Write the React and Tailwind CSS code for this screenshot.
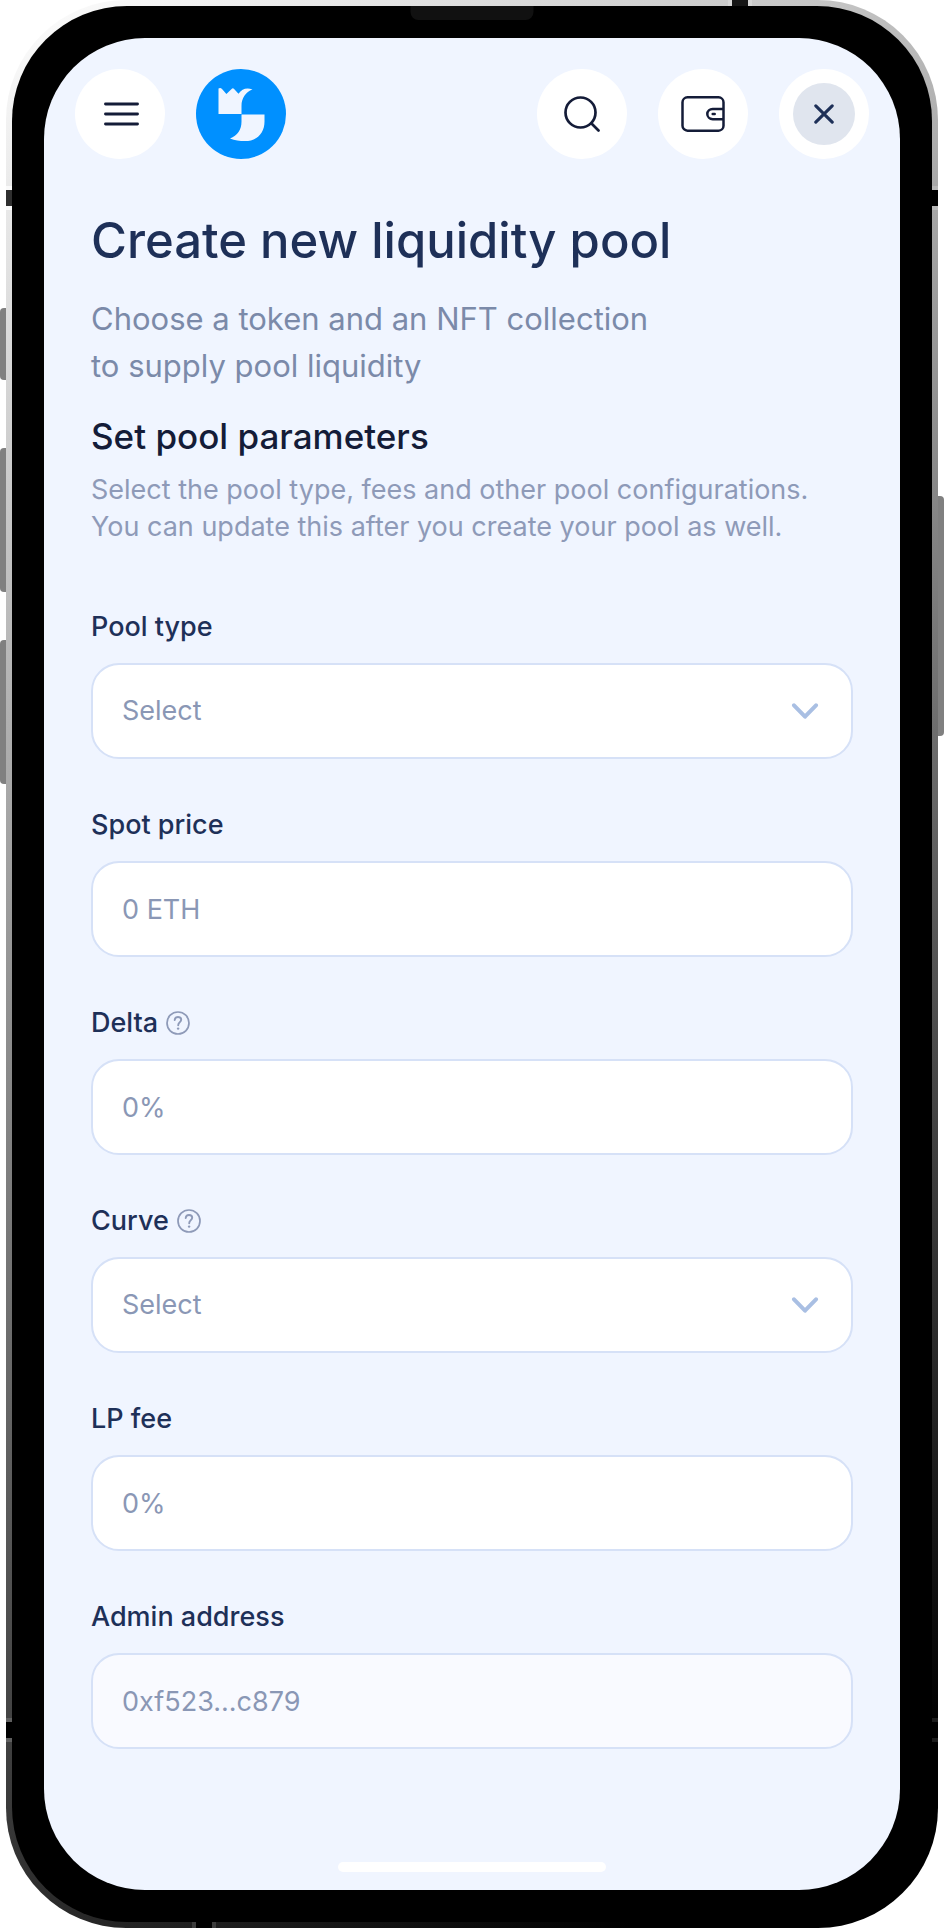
import React, { useState } from 'react';

const fields = [
  { id: 'poolType', label: 'Pool type', type: 'select', options: ['Buy', 'Sell', 'Trade'] },
  { id: 'spotPrice', label: 'Spot price', placeholder: '0 ETH' },
  { id: 'delta', label: 'Delta', placeholder: '0%', help: true },
  { id: 'curve', label: 'Curve', type: 'select', options: ['Linear', 'Exponential'], help: true },
  { id: 'lpFee', label: 'LP fee', placeholder: '0%' },
  { id: 'adminAddress', label: 'Admin address', placeholder: '0xf523...c879', disabled: true }
];

const LogoIcon = () => (
  <svg className="w-[90px] h-[90px]" viewBox="0 0 90 90" aria-hidden="true">
    <circle cx="45" cy="45" r="45" fill="#0090ff" />
    <path
      fill="#f0f5ff"
      d="M22.500 19.500c1.300-1 2.500-.7 3.500.6l4.400 4.900 5.200-5c1-.9 1.600-.9 2.500 0l4.400 4.700c3.500-4.800 8-6.600 14-4.300-6.800 2.500-11 8.500-11 16.500v8.100h-23z"
    />
    <path
      fill="#f0f5ff"
      d="M45.500 45.500h23v7c0 12-8 19.500-19.500 19.500-5.500 0-10-.5-15-2.500 7.500-2.800 11.500-9 11.500-17z"
    />
  </svg>
);

const MenuIcon = () => (
  <svg className="w-10 h-6" viewBox="0 0 40 24" fill="none" stroke="#141c38" strokeWidth="2.900" strokeLinecap="round">
    <path d="M5.500 2h32M5.500 12h32M5.500 22h32" />
  </svg>
);

const SearchIcon = () => (
  <svg className="w-9 h-9" viewBox="0 0 36 36" fill="none" stroke="#141c38" strokeWidth="2.700" strokeLinecap="round">
    <circle cx="16.500" cy="16.500" r="15" />
    <path d="M27.500 27.500L34.500 34.500" />
  </svg>
);

const WalletIcon = () => (
  <svg className="w-11 h-9" viewBox="0 0 44 36" fill="none" stroke="#141c38" strokeWidth="2.500">
    <rect x="1.500" y="1.300" width="41" height="33.400" rx="5" />
    <path d="M42 13H31.700a5.300 5 0 0 0 0 10.200H42" />
    <path d="M31.700 18.100h2" strokeLinecap="round" />
  </svg>
);

const CloseIcon = () => (
  <svg className="w-5 h-5" viewBox="0 0 20 20" fill="none" stroke="#1e3058" strokeWidth="3.100" strokeLinecap="round">
    <path d="M1.800 1.800l16.400 16.400M18.200 1.800L1.800 18.200" />
  </svg>
);

const ChevronIcon = () => (
  <svg
    className="pointer-events-none absolute right-[34px] top-1/2 h-4 w-7 -translate-y-1/2"
    viewBox="0 0 28 16"
    fill="none"
    stroke="#a9bfe3"
    strokeWidth="4"
    strokeLinecap="round"
    strokeLinejoin="round"
  >
    <path d="M3 2.300l11 11.400L25 2.300" />
  </svg>
);

const HelpIcon = () => (
  <svg className="w-6 h-6" viewBox="0 0 24 24" fill="none" stroke="#8e9ab8" strokeLinecap="round">
    <circle cx="12" cy="12" r="11" strokeWidth="1.700" />
    <path d="M8.700 9c.2-2 1.500-3 3.300-3s3.200 1.100 3.200 2.800c0 2.200-3 2.600-3 5.400" strokeWidth="1.900" />
    <circle cx="12.100" cy="17.600" r="1.200" fill="#8e9ab8" stroke="none" />
  </svg>
);

const IconButton = ({ label, children }) => (
  <button type="button" aria-label={label} className="flex h-[90px] w-[90px] items-center justify-center rounded-full bg-white">
    {children}
  </button>
);

const Field = ({ field, value, onChange }) => {
  const box = 'block h-24 w-full rounded-[28px] border-2 border-[#d6e1f7] px-[29px] text-[27px] text-[#8a97b5] placeholder:text-[#8a97b5] placeholder:opacity-100';

  return (
    <div className="flex flex-col gap-5">
      <div className="flex h-8 items-center gap-2">
        <label htmlFor={field.id} className="text-[27px] leading-8 font-medium text-[#1e3058]">
          {field.label}
        </label>
        {field.help && (
          <button type="button" aria-label={`About ${field.label}`}>
            <HelpIcon />
          </button>
        )}
      </div>
      {field.type === 'select' ? (
        <div className="relative">
          <select id={field.id} value={value} onChange={onChange} className={`${box} appearance-none bg-white`}>
            <option value="">Select</option>
            {field.options.map((option) => (
              <option key={option} value={option}>{option}</option>
            ))}
          </select>
          <ChevronIcon />
        </div>
      ) : (
        <input
          id={field.id}
          type="text"
          value={value}
          onChange={onChange}
          placeholder={field.placeholder}
          disabled={field.disabled}
          className={`${box} ${field.disabled ? 'bg-[#f9faff]' : 'bg-white'}`}
        />
      )}
    </div>
  );
};

// Antenna gaps and side buttons on the metal rim
const FrameDetails = () => (
  <div aria-hidden="true">
    <div className="absolute left-0 top-[308px] h-[72px] w-[6px] rounded-l bg-[#808080]" />
    <div className="absolute left-0 top-[448px] h-36 w-[6px] rounded-l bg-[#808080]" />
    <div className="absolute left-0 top-[640px] h-36 w-[6px] rounded-l bg-[#808080]" />
    <div className="absolute right-0 top-[496px] h-60 w-[6px] rounded-r bg-[#808080]" />
    <div className="absolute left-[6px] top-[186px] h-6 w-[6px] border-y-4 border-[#fafafa] bg-[#303030]" />
    <div className="absolute right-[6px] top-[186px] h-6 w-[6px] border-y-4 border-[#b8b8b8] bg-black" />
    <div className="absolute left-[6px] bottom-[186px] h-6 w-[6px] border-y-4 border-[#606060] bg-black" />
    <div className="absolute right-[6px] bottom-[186px] h-6 w-[6px] border-y-4 border-[#1c1c1c] bg-black" />
    <div className="absolute right-48 top-0 h-[6px] w-6 border-x-4 border-[#d6d6d6] bg-[#161616]" />
    <div className="absolute left-48 bottom-0 h-[6px] w-6 border-x-4 border-[#3c3c3c] bg-black" />
    <div className="absolute left-1/2 top-[6px] h-[14px] w-[123px] -translate-x-1/2 rounded-b-lg bg-[#111111]" />
  </div>
);

const App = () => {
  const [values, setValues] = useState({});

  const handleChange = (id) => (e) => {
    setValues(prev => ({ ...prev, [id]: e.target.value }));
  };

  return (
    <div className="relative min-h-screen bg-white px-[6px] font-['Inter',sans-serif]">
      {/* Phone body */}
      <div className="flex min-h-screen flex-col rounded-[120px] bg-[linear-gradient(147deg,#ffffff,#000000_92%)] p-[6px]">
        <div className="flex flex-1 flex-col rounded-[115px] bg-black p-8">
          {/* Screen */}
          <div className="flex flex-1 flex-col rounded-[101px] bg-[#f0f5ff] pt-[31px] pb-[18px]">
            <header className="flex items-center justify-between px-[31px]">
              <div className="flex gap-[31px]">
                <IconButton label="Menu"><MenuIcon /></IconButton>
                <a href="#home" aria-label="Home"><LogoIcon /></a>
              </div>
              <div className="flex gap-[31px]">
                <IconButton label="Search"><SearchIcon /></IconButton>
                <IconButton label="Wallet"><WalletIcon /></IconButton>
                <IconButton label="Close">
                  <span className="flex h-[62px] w-[62px] items-center justify-center rounded-full bg-[#e0e5ee]">
                    <CloseIcon />
                  </span>
                </IconButton>
              </div>
            </header>

            <main className="flex-1 px-[47px] pt-12">
              <h1 className="text-[49px] leading-[68px] font-medium text-[#1e3058]">Create new liquidity pool</h1>
              <p className="mt-5 text-[31px] leading-[47px] text-[#7b8aa9]">
                Choose a token and an NFT collection
                <br />
                to supply pool liquidity
              </p>
              <h2 className="mt-6 text-[35px] leading-[46px] font-medium text-[#141c38]">Set pool parameters</h2>
              <p className="mt-3 text-[27px] leading-[37px] text-[#8e9ab8]">
                Select the pool type, fees and other pool configurations.
                <br />
                You can update this after you create your pool as well.
              </p>

              <form className="mt-[66px] flex flex-col gap-[50px]">
                {fields.map((field) => (
                  <Field key={field.id} field={field} value={values[field.id] || ''} onChange={handleChange(field.id)} />
                ))}
              </form>
            </main>

            {/* Home indicator */}
            <div className="mx-auto h-[10px] w-[268px] rounded-full bg-white" />
          </div>
        </div>
      </div>
      <FrameDetails />
    </div>
  );
};

export default App;
